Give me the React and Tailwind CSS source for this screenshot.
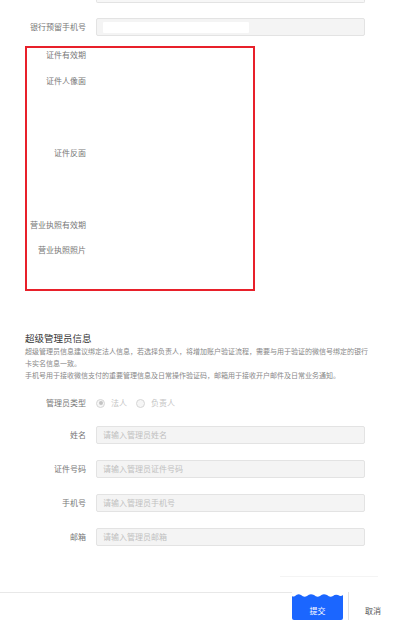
const labelCls = "w-[86px] shrink-0 text-right text-[8px] leading-[12px] text-[#777]";

function Field({ label, placeholder, className }) {
  return (
    <div className={`flex items-center ${className}`}>
      <div className={labelCls}>{label}</div>
      <div className="ml-[10px] flex h-[18px] w-[269px] items-center rounded-[2px] border border-[#e3e3e3] bg-[#f4f4f4] px-[6px] text-[8px] leading-[12px] text-[#c0c0c0]">
        {placeholder}
      </div>
    </div>
  );
}

function Radio({ checked, label }) {
  return (
    <div className="flex items-center">
      <span className="flex h-[9px] w-[9px] items-center justify-center rounded-full border border-[#d6d6d6] bg-[#f6f6f6]">
        {checked && <span className="h-[4px] w-[4px] rounded-full bg-[#c4c4c4]" />}
      </span>
      <span className="ml-[6px] text-[8px] leading-[12px] text-[#c4c4c4]">{label}</span>
    </div>
  );
}

const boxLabels = [
  { text: "证件有效期", mt: "mt-[1px]" },
  { text: "证件人像面", mt: "mt-[14px]" },
  { text: "证件反面", mt: "mt-[60px]" },
  { text: "营业执照有效期", mt: "mt-[60px]" },
  { text: "营业执照照片", mt: "mt-[13px]" },
];

export default function App() {
  return (
    <div className="min-h-[627px] w-[402px] overflow-hidden bg-white font-['Noto_Sans_CJK_SC',sans-serif]">
      {/* previous input, cut off at the top */}
      <div className="ml-[96px] h-[3px] w-[269px] rounded-b-[2px] border-x border-b border-[#e3e3e3] bg-[#f7f7f7]" />

      <div className="mt-[15px] flex items-center">
        <div className={labelCls}>银行预留手机号</div>
        <div className="ml-[10px] flex h-[18px] w-[269px] items-center rounded-[2px] border border-[#e3e3e3] bg-[#f4f4f4] px-[6px]">
          <div className="h-[11px] w-[146px] rounded-[1px] bg-white" />
        </div>
      </div>

      {/* red annotation box */}
      <div className="ml-[25px] mt-[10px] flex h-[245px] w-[230px] flex-col border-2 border-[#e8202a]">
        {boxLabels.map((l) => (
          <div key={l.text} className={`w-[59px] whitespace-nowrap text-right text-[8px] leading-[12px] text-[#777] ${l.mt}`}>
            {l.text}
          </div>
        ))}
      </div>

      <div className="ml-[25px] mt-[40px] text-[9.5px] leading-[14px] text-[#333]">超级管理员信息</div>
      <div className="ml-[25px] whitespace-nowrap text-[7px] leading-[12px] text-[#888]">
        <div>超级管理员信息建议绑定法人信息，若选择负责人，将增加账户验证流程，需要与用于验证的微信号绑定的银行</div>
        <div>卡实名信息一致。</div>
        <div>手机号用于接收微信支付的重要管理信息及日常操作验证码，邮箱用于接收开户邮件及日常业务通知。</div>
      </div>

      <div className="mt-[16px] flex items-center">
        <div className={labelCls}>管理员类型</div>
        <div className="ml-[10px] flex items-center gap-[9px]">
          <Radio checked label="法人" />
          <Radio label="负责人" />
        </div>
      </div>

      <Field className="mt-[17px]" label="姓名" placeholder="请输入管理员姓名" />
      <Field className="mt-[16px]" label="证件号码" placeholder="请输入管理员证件号码" />
      <Field className="mt-[16px]" label="手机号" placeholder="请输入管理员手机号" />
      <Field className="mt-[16px]" label="邮箱" placeholder="请输入管理员邮箱" />

      <div className="ml-[280px] mt-[30px] h-px w-[98px] bg-[#f4f4f4]" />

      <div className="mt-[15px] flex h-[28px]">
        <div className="w-[292px] border-t border-[#e8e8e8]" />
        <div className="relative flex w-[51px] items-end justify-center rounded-b-[2px] bg-[#1b66ff] pb-[3px] text-[8px] leading-[12px] text-white">
          <svg className="absolute left-0 top-0 h-[7px] w-[51px]" viewBox="0 0 51 7" preserveAspectRatio="none">
            <path d="M0 0 H51 V3 Q49 5 46 3 Q43 2 41 4 Q38 6 35 3 Q31 1 28 4 Q25 6 22 3 Q18 1 15 4 Q12 6 9 3 Q6 1 3 4 Q1 5 0 4 Z" fill="#fff" />
          </svg>
          提交
        </div>
        <div className="ml-[5px] flex flex-1 items-end border-l border-[#e2e2e2] pb-[3px] pl-[16px] text-[8px] leading-[12px] text-[#555]">
          取消
        </div>
      </div>
    </div>
  );
}
